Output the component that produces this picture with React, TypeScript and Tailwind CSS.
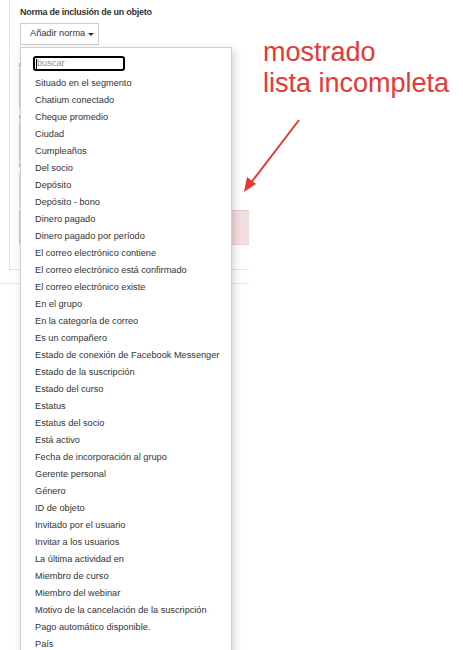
import React from "react";

const items = [
  "Situado en el segmento",
  "Chatium conectado",
  "Cheque promedio",
  "Ciudad",
  "Cumpleaños",
  "Del socio",
  "Depósito",
  "Depósito - bono",
  "Dinero pagado",
  "Dinero pagado por período",
  "El correo electrónico contiene",
  "El correo electrónico está confirmado",
  "El correo electrónico existe",
  "En el grupo",
  "En la categoría de correo",
  "Es un compañero",
  "Estado de conexión de Facebook Messenger",
  "Estado de la suscripción",
  "Estado del curso",
  "Estatus",
  "Estatus del socio",
  "Está activo",
  "Fecha de incorporación al grupo",
  "Gerente personal",
  "Género",
  "ID de objeto",
  "Invitado por el usuario",
  "Invitar a los usuarios",
  "La última actividad en",
  "Miembro de curso",
  "Miembro del webinar",
  "Motivo de la cancelación de la suscripción",
  "Pago automático disponible.",
  "País",
];

export default function App() {
  return (
    <div className="relative w-[463px] h-[650px] overflow-hidden bg-white font-['Liberation_Sans',Arial,sans-serif] text-[#333]">
      {/* underlying page */}
      <div className="w-[249px] flex flex-col">
        <div className="ml-[9px] h-[270px] border-l border-b border-[#e3e3e3] flex flex-col pl-[10px] pt-[6px]">
          <div className="text-[9px] leading-[12px] font-bold tracking-[-0.25px] text-[#333]">
            Norma de inclusión de un objeto
          </div>
          <div className="mt-[5px] self-start h-[22px] w-[79px] border border-[#ccc] flex items-center pl-[9px] text-[9.2px] text-[#333]">
            <span>Añadir norma</span>
            <span className="ml-[3px] inline-block w-0 h-0 border-l-[3px] border-r-[3px] border-t-[3px] border-l-transparent border-r-transparent border-t-[#333]" />
          </div>
          <div className="flex-1 flex">
            <div className="ml-[-1px] w-[1px] flex flex-col pt-[18px]">
              <div className="h-[4px] bg-[#e8b060]" />
              <div className="mt-[2px] h-[40px] bg-[#d4d4d4]" />
              <div className="mt-[6px] h-[4px] bg-[#e8b060]" />
              <div className="mt-[2px] h-[40px] bg-[#d4d4d4]" />
              <div className="mt-[2px] h-[4px] bg-[#e8b060]" />
              <div className="mt-[6px] h-[34px] bg-[#dcdcdc]" />
              <div className="mt-[3px] h-[34px] bg-[#e2c4c8]" />
            </div>
            <div className="flex-1 flex flex-col items-end pt-[165px]">
              <div className="w-[30px] h-[35px] bg-[#f2dede] border border-r-0 border-[#ebccd1]" />
            </div>
          </div>
        </div>
        <div className="mt-[13px] border-t border-[#e8e8e8]" />
      </div>

      {/* dropdown menu */}
      <div className="absolute left-[20px] top-[47px] w-[212px] h-[640px] bg-white border border-[#d0d0d0] shadow-[2px_3px_8px_rgba(0,0,0,0.18)]">
        <div className="pt-[8px] pl-[12px]">
          <div className="w-[92px] h-[15px] border-2 border-black rounded-[3px] flex items-center pl-[1px] text-[9.2px] leading-none">
            <span className="w-px h-[10px] bg-black" />
            <span className="text-[#8e8e9e]">buscar</span>
          </div>
        </div>
        <ul className="mt-[4px]">
          {items.map((t) => (
            <li key={t} className="h-[17px] leading-[17px] pl-[14px] text-[9.2px] text-[#333] whitespace-nowrap">
              {t}
            </li>
          ))}
        </ul>
      </div>

      {/* annotation */}
      <div className="absolute left-[263px] top-[37px] text-[27px] leading-[31px] text-[#e53935]">
        <div>mostrado</div>
        <div>lista incompleta</div>
      </div>
      <svg className="absolute left-0 top-0" width="463" height="650" viewBox="0 0 463 650">
        <line x1="299" y1="120" x2="250" y2="184" stroke="#e53935" strokeWidth="2" />
        <polygon points="244,192 247,177 256,184" fill="#e53935" />
      </svg>
    </div>
  );
}
